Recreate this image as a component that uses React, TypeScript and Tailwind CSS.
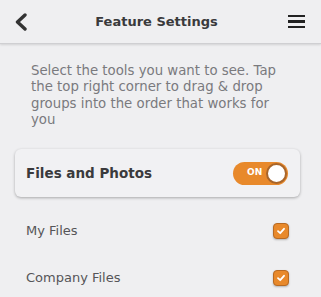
const font = { fontFamily: '"DejaVu Sans", "Open Sans", sans-serif' };

function Checkbox() {
  return (
    <div className="w-[16px] h-[16px] rounded-[4px] bg-[#e8892b] border border-[#b86a22] shadow-[0_1px_2px_rgba(0,0,0,0.25)] flex items-center justify-center">
      <svg width="10" height="10" viewBox="0 0 10 10" fill="none">
        <path d="M2 5.2 L4.2 7.2 L8 2.8" stroke="white" strokeWidth="1.8" strokeLinecap="round" strokeLinejoin="round" />
      </svg>
    </div>
  );
}

function Toggle() {
  return (
    <div className="w-[55px] h-[23px] rounded-full bg-[#e8892b] flex items-center justify-between pl-[14px] pr-[1px]">
      <span className="text-[9px] font-bold text-white">ON</span>
      <div className="w-[21px] h-[21px] rounded-full bg-white border-2 border-[#a8652a]" />
    </div>
  );
}

export default function App() {
  const rows = ['My Files', 'Company Files'];
  return (
    <div className="w-[321px] h-[297px] bg-[#efeff1] overflow-hidden" style={font}>
      <div className="h-[44px] flex items-center justify-between pl-[14px] pr-[16px] border-b border-[#cfcfd2] shadow-[0_1px_2px_rgba(0,0,0,0.12)]">
        <svg width="14" height="18" viewBox="0 0 14 18" fill="none">
          <path d="M11 2 L3.5 9 L11 16" stroke="#333" strokeWidth="3.4" strokeLinecap="round" strokeLinejoin="round" />
        </svg>
        <span className="text-[13px] font-bold text-[#3a3a3c] pr-[3px]">Feature Settings</span>
        <div className="w-[17px] flex flex-col gap-[3px]">
          <div className="h-[2.5px] bg-[#222]" />
          <div className="h-[2.5px] bg-[#222]" />
          <div className="h-[2.5px] bg-[#222]" />
        </div>
      </div>
      <p className="px-[31px] pt-[19px] text-[13.3px] leading-[16.3px] text-[#7a7a7e]">
        Select the tools you want to see. Tap the top right corner to drag &amp; drop groups into the order that works for you
      </p>
      <div className="ml-[15px] mr-[21px] mt-[21px] h-[48px] rounded-[6px] bg-[#f1f1f3] shadow-[0_1px_3px_rgba(0,0,0,0.3)] flex items-center justify-between pl-[11px] pr-[12px]">
        <span className="text-[13.5px] font-bold text-[#3a3a3c]">Files and Photos</span>
        <Toggle />
      </div>
      <div className="mt-[10px]">
        {rows.map((r) => (
          <div key={r} className="h-[47px] flex items-center justify-between pl-[26px] pr-[32px]">
            <span className="text-[13px] text-[#555558]">{r}</span>
            <Checkbox />
          </div>
        ))}
      </div>
    </div>
  );
}
